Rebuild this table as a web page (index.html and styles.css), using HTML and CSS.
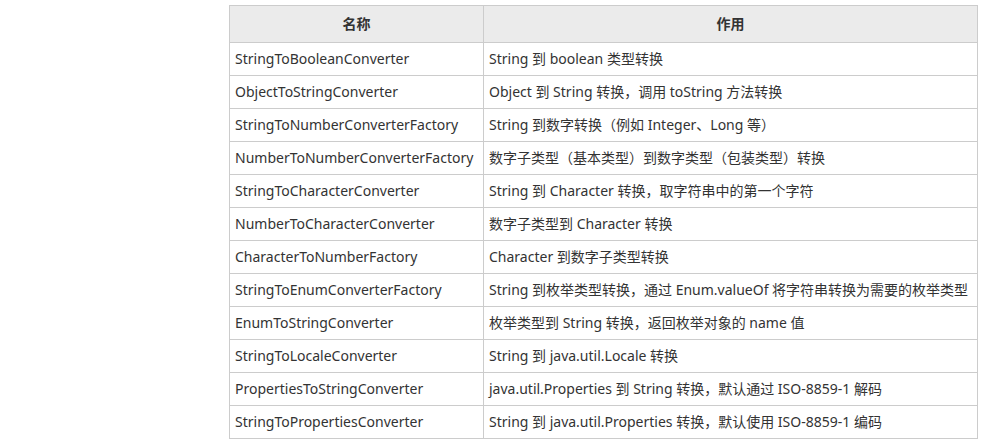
FILE: index.html
```html
<!DOCTYPE html>
<html lang="zh-CN">
<head>
<meta charset="utf-8">
<link rel="stylesheet" href="styles.css">
</head>
<body>
<div class="wrap">
<table class="conv">
<colgroup><col class="c1"><col class="c2"></colgroup>
<thead>
<tr><th>名称</th><th>作用</th></tr>
</thead>
<tbody>
<tr><td>StringToBooleanConverter</td><td>String 到 boolean 类型转换</td></tr>
<tr><td>ObjectToStringConverter</td><td>Object 到 String 转换，调用 toString 方法转换</td></tr>
<tr><td>StringToNumberConverterFactory</td><td>String 到数字转换（例如 Integer、Long 等）</td></tr>
<tr><td>NumberToNumberConverterFactory</td><td>数字子类型（基本类型）到数字类型（包装类型）转换</td></tr>
<tr><td>StringToCharacterConverter</td><td>String 到 Character 转换，取字符串中的第一个字符</td></tr>
<tr><td>NumberToCharacterConverter</td><td>数字子类型到 Character 转换</td></tr>
<tr><td>CharacterToNumberFactory</td><td>Character 到数字子类型转换</td></tr>
<tr><td>StringToEnumConverterFactory</td><td>String 到枚举类型转换，通过 Enum.valueOf 将字符串转换为需要的枚举类型</td></tr>
<tr><td>EnumToStringConverter</td><td>枚举类型到 String 转换，返回枚举对象的 name 值</td></tr>
<tr><td>StringToLocaleConverter</td><td>String 到 java.util.Locale 转换</td></tr>
<tr><td>PropertiesToStringConverter</td><td>java.util.Properties 到 String 转换，默认通过 ISO-8859-1 解码</td></tr>
<tr><td>StringToPropertiesConverter</td><td>String 到 java.util.Properties 转换，默认使用 ISO-8859-1 编码</td></tr>
</tbody>
</table>
</div>
</body>
</html>
```
FILE: styles.css
```css
html, body {
  margin: 0;
  padding: 0;
  background: #ffffff;
}
.wrap {
  padding: 5px 0 0 229px;
}
.conv {
  border-collapse: collapse;
  table-layout: fixed;
  width: 748px;
  font-family: "Noto Sans", "Noto Sans CJK SC", sans-serif;
  font-size: 14px;
  color: #333333;
}
.c1 { width: 254px; }
.c2 { width: 494px; }
.conv th, .conv td {
  border: 1px solid #cccccc;
  padding: 0 5px 2px 5px;
  white-space: nowrap;
  overflow: hidden;
}
.conv th {
  background: #ebebeb;
  height: 34px;
  font-weight: bold;
  text-align: center;
}
.conv td {
  height: 30px;
  text-align: left;
}
```
